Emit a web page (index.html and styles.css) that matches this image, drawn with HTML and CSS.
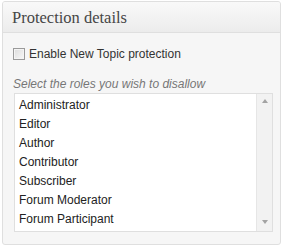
FILE: index.html
```html
<!DOCTYPE html>
<html>
<head>
<meta charset="utf-8">
<link rel="stylesheet" href="styles.css">
</head>
<body>
<div class="panel">
  <div class="panel-head"><h3>Protection details</h3></div>
  <div class="panel-body">
    <label class="check-row"><span class="checkbox"></span><span>Enable New Topic protection</span></label>
    <p class="hint">Select the roles you wish to disallow</p>
    <div class="listbox">
      <ul class="items">
        <li>Administrator</li>
        <li>Editor</li>
        <li>Author</li>
        <li>Contributor</li>
        <li>Subscriber</li>
        <li>Forum Moderator</li>
        <li>Forum Participant</li>
      </ul>
      <div class="scrollbar">
        <span class="arrow up"></span>
        <span class="arrow down"></span>
      </div>
    </div>
  </div>
</div>
</body>
</html>
```

FILE: styles.css
```css
* { box-sizing: border-box; }
html, body { margin: 0; padding: 0; background: #fff; }
body { font-family: "Liberation Sans", Arial, sans-serif; font-size: 12px; }

.panel {
  margin: 1px 0 0 2px;
  width: 279px;
  height: 244px;
  border: 1px solid #dfdfdf;
  border-radius: 3px;
  background: #f6f6f6;
  overflow: hidden;
}
.panel-head {
  height: 31px;
  border-bottom: 1px solid #dfdfdf;
  background: linear-gradient(to bottom, #f9f9f9, #ececec);
  padding: 0 0 0 9px;
  display: flex;
  align-items: center;
}
.panel-head h3 {
  margin: 0;
  font-family: "Liberation Serif", "Times New Roman", serif;
  font-weight: normal;
  font-size: 16.5px;
  color: #464646;
  line-height: 20px;
  padding-top: 1px;
}
.panel-body { padding: 14px 0 0 9px; }

.check-row {
  display: flex;
  align-items: center;
  height: 14px;
  line-height: 14px;
  color: #333;
}
.checkbox {
  width: 12px;
  height: 12px;
  border: 1px solid #9a9a9a;
  background: linear-gradient(135deg, #dcdcdc, #f8f8f8);
  box-shadow: inset 0 0 0 1px #f4f4f4;
  margin: 0 4px 0 1px;
}
.hint {
  margin: 16px 0 0 1px;
  line-height: 14px;
  font-style: italic;
  color: #777;
}
.listbox {
  margin: 2px 0 0 2px;
  width: 259px;
  height: 139px;
  border: 1px solid #dfdfdf;
  background: #fff;
  display: flex;
}
.items {
  list-style: none;
  margin: 0;
  padding: 2px 0 0 4px;
  flex: 1;
  color: #222;
}
.items li { line-height: 19px; height: 19px; white-space: nowrap; }
.scrollbar {
  width: 16px;
  background: #f2f2f2;
  border-left: 1px solid #e6e6e6;
  display: flex;
  flex-direction: column;
  justify-content: space-between;
  align-items: center;
  padding: 5px 0 7px;
}
.arrow {
  width: 0;
  height: 0;
  border-left: 3.5px solid transparent;
  border-right: 3.5px solid transparent;
}
.arrow.up { border-bottom: 4px solid #a3a3a3; }
.arrow.down { border-top: 4px solid #a3a3a3; }
```
